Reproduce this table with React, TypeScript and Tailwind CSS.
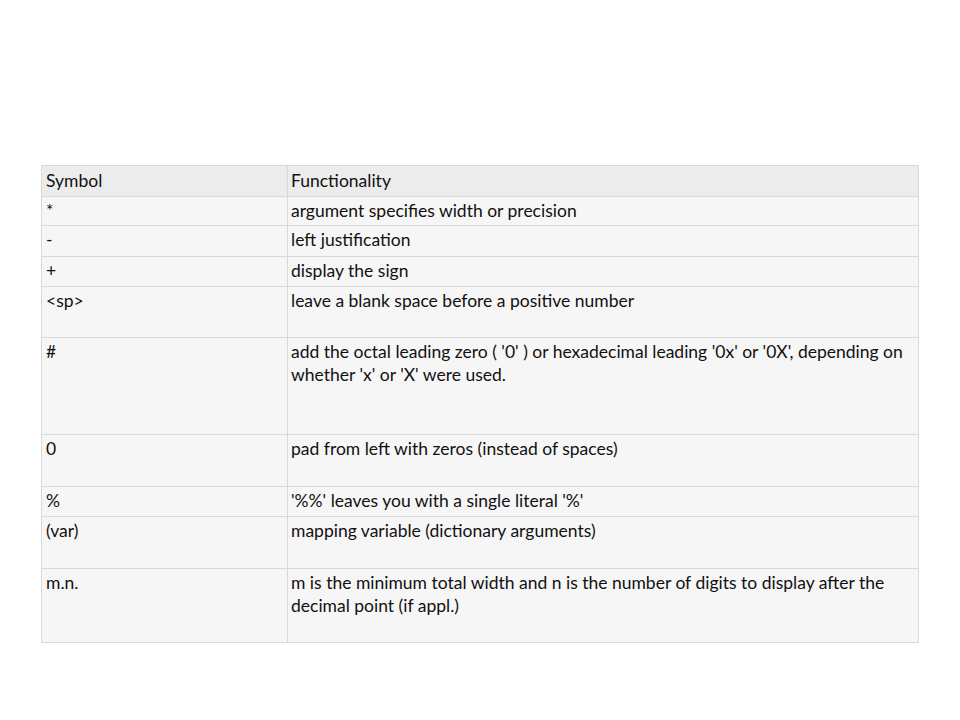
const rows: { symbol: string; text: string; h: string }[] = [
    { symbol: '*', text: 'argument specifies width or precision', h: 'h-[29px]' },
    { symbol: '-', text: 'left justification', h: 'h-[31px]' },
    { symbol: '+', text: 'display the sign', h: 'h-[30px]' },
    { symbol: '<sp>', text: 'leave a blank space before a positive number', h: 'h-[51px]' },
    {
        symbol: '#',
        text: "add the octal leading zero ( '0' ) or hexadecimal leading '0x' or '0X', depending on whether 'x' or 'X' were used.",
        h: 'h-[97px]',
    },
    { symbol: '0', text: 'pad from left with zeros (instead of spaces)', h: 'h-[52px]' },
    { symbol: '%', text: "'%%' leaves you with a single literal '%'", h: 'h-[30px]' },
    { symbol: '(var)', text: 'mapping variable (dictionary arguments)', h: 'h-[52px]' },
    {
        symbol: 'm.n.',
        text: 'm is the minimum total width and n is the number of digits to display after the decimal point (if appl.)',
        h: 'h-[74px]',
    },
];

export default function App() {
    return (
        <div className="w-[960px] h-[720px] bg-white pt-[165px] pl-[41px] font-['Lato','Liberation_Sans',sans-serif] text-[17.5px] leading-[23px] text-[#111111]">
            <table className="w-[878px] border-collapse table-fixed">
                <colgroup>
                    <col className="w-[246px]" />
                    <col />
                </colgroup>
                <thead>
                    <tr className="h-[31px] bg-[#ececec]">
                        <th className="border border-[#d9d9d9] px-[4px] pt-[3px] text-left align-top font-normal">Symbol</th>
                        <th className="border border-[#d9d9d9] px-[3px] pt-[3px] text-left align-top font-normal">Functionality</th>
                    </tr>
                </thead>
                <tbody>
                    {rows.map((row) => (
                        <tr key={row.symbol} className={`${row.h} bg-[#f6f6f6]`}>
                            <td className="border border-[#d9d9d9] px-[4px] pt-[2px] align-top">{row.symbol}</td>
                            <td className="border border-[#d9d9d9] pl-[3px] pr-[12px] pt-[2px] align-top">{row.text}</td>
                        </tr>
                    ))}
                </tbody>
            </table>
        </div>
    );
}
